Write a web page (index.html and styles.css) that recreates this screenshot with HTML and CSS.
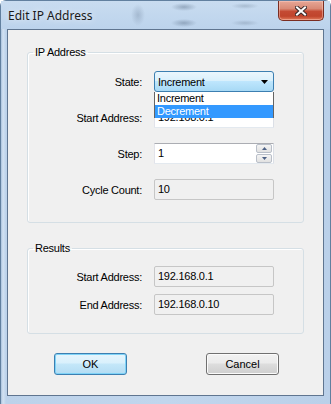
FILE: index.html
```html
<!DOCTYPE html>
<html lang="en">
<head>
  <meta charset="UTF-8" />
  <title>Edit IP Address</title>
  <link rel="stylesheet" href="styles.css">
</head>
<body>

  <!-- Fereastra dialog -->
  <div class="window">
    <div class="titlebar">
      <span class="title">Edit IP Address</span>
      <button class="close-btn" aria-label="Close">
        <svg width="12" height="10" viewBox="0 0 12 10">
          <path d="M2 1.5l8 7M10 1.5l-8 7" stroke="#3b2a2a" stroke-width="4" stroke-linecap="square"/>
          <path d="M2 1.5l8 7M10 1.5l-8 7" stroke="#fff" stroke-width="2" stroke-linecap="square"/>
        </svg>
      </button>
    </div>

    <div class="client">
      <!-- Grupul IP Address -->
      <fieldset class="group group-ip">
        <legend>IP Address</legend>
        <div class="rows">
          <label class="lbl">State:</label>
          <div class="combo-wrap">
            <div class="combo">
              <span>Increment</span>
              <svg class="combo-arrow" width="7" height="4" viewBox="0 0 7 4"><path d="M0 0h7L3.5 4z" fill="#000"/></svg>
            </div>
            <ul class="dropdown">
              <li>Increment</li>
              <li class="selected">Decrement</li>
            </ul>
          </div>

          <label class="lbl">Start Address:</label>
          <div class="field">192.168.0.1</div>

          <label class="lbl">Step:</label>
          <div class="field spin-field">
            <span class="field-text">1</span>
            <div class="spin">
              <span class="spin-btn"><svg width="5" height="3" viewBox="0 0 5 3"><path d="M0 3h5L2.5 0z" fill="#4d6185"/></svg></span>
              <span class="spin-btn"><svg width="5" height="3" viewBox="0 0 5 3"><path d="M0 0h5L2.5 3z" fill="#4d6185"/></svg></span>
            </div>
          </div>

          <label class="lbl">Cycle Count:</label>
          <div class="field readonly">10</div>
        </div>
      </fieldset>

      <!-- Grupul Results -->
      <fieldset class="group group-results">
        <legend>Results</legend>
        <div class="rows rows-tight">
          <label class="lbl">Start Address:</label>
          <div class="field readonly">192.168.0.1</div>

          <label class="lbl">End Address:</label>
          <div class="field readonly">192.168.0.10</div>
        </div>
      </fieldset>

      <!-- Butoane -->
      <div class="buttons">
        <button class="btn btn-default">OK</button>
        <button class="btn btn-cancel">Cancel</button>
      </div>
    </div>
  </div>

</body>
</html>
```

FILE: styles.css
```css
/* Reset de bază */
* {
  margin: 0;
  padding: 0;
  box-sizing: border-box;
}

body {
  width: 331px;
  height: 404px;
  background: #fff;
  font-family: "Liberation Sans", Arial, sans-serif;
  font-size: 11px;
  letter-spacing: -0.25px;
  color: #000;
  overflow: hidden;
}

/* Rama Aero */
.window {
  width: 331px;
  height: 404px;
  display: flex;
  flex-direction: column;
  padding-bottom: 8px;
  border-radius: 6px 6px 0 0;
  border: 1px solid #62809f;
  border-bottom: none;
  background:
    linear-gradient(to right, #a9c2dd 0, #d3e2f2 2px, #bcd2ea 5px, #c1d6ed 50%, #bad0e9 100%);
}

.titlebar {
  height: 28px;
  display: flex;
  align-items: flex-start;
  padding-left: 7px;
  background:
    radial-gradient(ellipse 7px 11px at 137px 14px, rgba(110, 130, 155, 0.35), transparent),
    radial-gradient(ellipse 13px 4px at 183px 6px, rgba(90, 110, 135, 0.45), transparent),
    radial-gradient(ellipse 13px 4px at 183px 22px, rgba(90, 110, 135, 0.45), transparent),
    radial-gradient(ellipse 14px 3px at 244px 5px, rgba(110, 128, 150, 0.35), transparent),
    radial-gradient(ellipse 14px 3px at 244px 22px, rgba(110, 128, 150, 0.35), transparent),
    linear-gradient(#c9dcf0, #bcd3ec);
}

.title {
  margin-top: 7px;
  font-family: "Noto Sans", "Open Sans", sans-serif;
  font-size: 12px;
  line-height: 16px;
  letter-spacing: 0;
  color: #1a1a1a;
  text-shadow: 0 0 6px rgba(255, 255, 255, 0.9);
}

.close-btn {
  margin-left: auto;
  margin-right: 6px;
  width: 46px;
  height: 20px;
  display: flex;
  align-items: center;
  justify-content: center;
  border: 1px solid #7a2d22;
  border-top: none;
  border-radius: 0 0 5px 5px;
  background: linear-gradient(#e7a797 0, #d98a76 40%, #c44a33 55%, #c0442c 80%, #e07a5a 100%);
  box-shadow: inset 0 0 0 1px rgba(255, 210, 200, 0.45);
}

/* Zona client */
.client {
  flex: 1;
  margin: 0 6px;
  border: 1px solid #5f7590;
  background: #f0f0f0;
  display: flex;
  flex-direction: column;
}

/* Group box */
.group {
  margin: 16px 19px 0 19px;
  border: 1px solid #d5dfe5;
  border-radius: 3px;
  box-shadow: inset 1px 1px 0 #fff;
  padding: 13px 0 22px 0;
}

.group legend {
  margin-left: 5px;
  padding: 0 2px;
  line-height: 12px;
  color: #000;
}

.group-results {
  margin-top: 19px;
  padding: 12px 0 18px 0;
}

.rows {
  display: grid;
  grid-template-columns: 114px 120px;
  column-gap: 12px;
  row-gap: 15px;
  align-items: center;
}

.rows-tight {
  row-gap: 7px;
}

.lbl {
  text-align: right;
}

/* Câmpuri text */
.field {
  height: 21px;
  line-height: 19px;
  padding-left: 3px;
  background: #fff;
  border: 1px solid;
  border-color: #abadb3 #dbdfe6 #e3e9ef #e2e3ea;
  border-radius: 1px;
  white-space: nowrap;
}

.field.readonly {
  background: #f0f0f0;
  border-color: #c6c6c6;
  border-radius: 2px;
}

.spin-field {
  display: flex;
  align-items: flex-start;
}

.field-text {
  flex: 1;
}

.spin {
  width: 16px;
  margin: 0 1px 0 auto;
  display: flex;
  flex-direction: column;
  gap: 1px;
}

.spin-btn {
  height: 9px;
  display: flex;
  align-items: center;
  justify-content: center;
  border: 1px solid #b9bfc9;
  border-radius: 2px;
  background: linear-gradient(#f4f4f4, #e1e1e1);
}

/* Combobox deschis */
.combo-wrap {
  position: relative;
  height: 21px;
}

.combo {
  height: 21px;
  display: flex;
  align-items: center;
  padding-left: 3px;
  border: 1px solid #3c7fb1;
  border-radius: 3px;
  background: linear-gradient(#eaf6fd 0, #d9f0fc 45%, #bee6fd 50%, #a7d9f5 100%);
}

.combo-arrow {
  margin-left: auto;
  margin-right: 5px;
}

.dropdown {
  position: absolute;
  top: 21px;
  left: 0;
  width: 120px;
  list-style: none;
  background: #fff;
  border: 1px solid #646464;
  border-top: none;
  border-bottom: none;
  z-index: 5;
}

.dropdown li {
  height: 13px;
  line-height: 13px;
  padding-left: 2px;
}

.dropdown li.selected {
  background: #3399ff;
  color: #fff;
}

/* Butoane */
.buttons {
  display: flex;
  margin-top: 19px;
  padding-left: 46px;
}

.btn {
  width: 73px;
  height: 22px;
  font-family: "Liberation Sans", Arial, sans-serif;
  font-size: 11px;
  color: #000;
  border-radius: 3px;
  border: 1px solid #707070;
}

.btn-default {
  border-color: #3c7fb1;
  background: linear-gradient(#e6f5fc 0, #d9f0fc 45%, #c4e7f9 50%, #b3dcf3 100%);
  box-shadow: inset 0 0 0 1px #7fd3f7;
}

.btn-cancel {
  margin-left: 79px;
  background: linear-gradient(#f2f2f2 0, #ebebeb 45%, #dddddd 50%, #cfcfcf 100%);
  box-shadow: inset 0 0 0 1px #fbfbfb;
}
```
